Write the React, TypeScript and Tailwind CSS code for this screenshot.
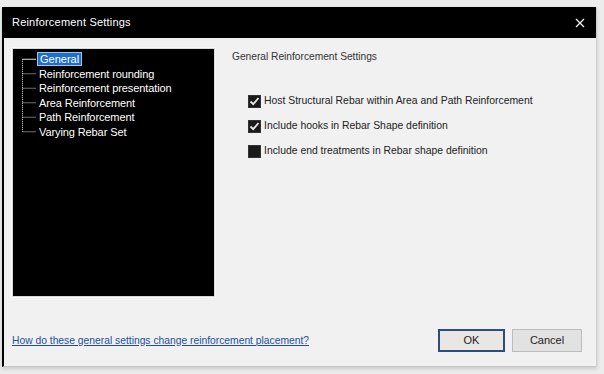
import React from 'react';

const font = { fontFamily: '"Liberation Sans", Arial, sans-serif' };

const treeItems = [
  'General',
  'Reinforcement rounding',
  'Reinforcement presentation',
  'Area Reinforcement',
  'Path Reinforcement',
  'Varying Rebar Set',
];

const options = [
  { label: 'Host Structural Rebar within Area and Path Reinforcement', checked: true },
  { label: 'Include hooks in Rebar Shape definition', checked: true },
  { label: 'Include end treatments in Rebar shape definition', checked: false },
];

const Check: React.FC<{ checked: boolean }> = ({ checked }) => (
  <div className="w-[13px] h-[13px] border border-[#333] bg-[#1a1a1a] flex items-center justify-center shrink-0">
    {checked && (
      <svg width="11" height="11" viewBox="0 0 11 11">
        <path d="M1.5 5.5 L4.2 8.2 L9.5 2" stroke="#e8e8e8" strokeWidth="1.8" fill="none" />
      </svg>
    )}
  </div>
);

const App: React.FC = () => {
  const rowH = 14.5;
  return (
    <div className="w-[604px] h-[374px] bg-[#ececec] pt-[7px] pl-[2px] overflow-hidden" style={font}>
      <div className="w-[595px] h-[360px] flex flex-col bg-[#f1f1f1] border-l-2 border-black border-r border-r-[#cfcfcf] border-b border-b-[#c8c8c8] shadow-[0_2px_4px_rgba(0,0,0,0.15)]">
        {/* Title bar */}
        <div className="h-[31px] bg-black flex items-center justify-between pl-[8px] pr-[11px] shrink-0">
          <span className="text-white text-[11px] tracking-[0.2px]">Reinforcement Settings</span>
          <svg width="10" height="10" viewBox="0 0 10 10">
            <path d="M1 1 L9 9 M9 1 L1 9" stroke="#f0f0f0" strokeWidth="1.3" />
          </svg>
        </div>

        {/* Body */}
        <div className="flex pl-[8px] pt-[10px]">
          <div className="w-[203px] h-[249px] bg-black border border-[#d8d8d8] shadow-[0_0_0_1px_#f8f8f8] pt-[3px] pl-[5px] flex">
            <svg width="20" height={rowH * 6} className="shrink-0">
              <line x1="4.5" y1={rowH / 2} x2="4.5" y2={rowH * 5.5} stroke="#dcdcdc" strokeDasharray="1 1" />
              {treeItems.map((_, i) => (
                <line
                  key={i}
                  x1="4.5"
                  y1={rowH * i + rowH / 2}
                  x2="18"
                  y2={rowH * i + rowH / 2}
                  stroke="#dcdcdc"
                  strokeDasharray={i === 0 ? undefined : '1 1'}
                />
              ))}
            </svg>
            <div className="flex flex-col">
              {treeItems.map((t, i) => (
                <div key={t} className="h-[14.5px] flex items-center">
                  <span
                    className={
                      i === 0
                        ? 'bg-[#1f6fc9] text-white text-[11px] leading-[12px] px-[2px] outline outline-1 outline-[#9cc4ee]'
                        : 'text-white text-[11px] leading-[12px] px-[1px] tracking-[-0.1px]'
                    }
                  >
                    {t}
                  </span>
                </div>
              ))}
            </div>
          </div>

          <div className="pl-[17px] pt-[2px] flex flex-col">
            <div className="text-[10.2px] text-[#333] h-[14px] leading-[14px]">General Reinforcement Settings</div>
            <div className="flex flex-col gap-[11px] pl-[16px] pt-[30px]">
              {options.map((o) => (
                <div key={o.label} className="flex items-center gap-[3px] h-[14px]">
                  <Check checked={o.checked} />
                  <span className="text-[10.4px] text-[#222] leading-[14px]">{o.label}</span>
                </div>
              ))}
            </div>
          </div>
        </div>

        {/* Footer */}
        <div className="flex items-center justify-between pl-[8px] pr-[14px] pt-[32px]">
          <span className="text-[10.3px] text-[#1d4fa0] underline leading-[14px]">
            How do these general settings change reinforcement placement?
          </span>
          <div className="flex gap-[7px]">
            <button className="w-[67px] h-[23px] border-2 border-[#2a4f7d] bg-[#e9e6e4] text-[11px] text-[#222]">
              OK
            </button>
            <button className="w-[70px] h-[23px] border border-[#bcbcbc] bg-[#e2e2e2] text-[11px] text-[#222]">
              Cancel
            </button>
          </div>
        </div>
      </div>
    </div>
  );
};

export default App;
